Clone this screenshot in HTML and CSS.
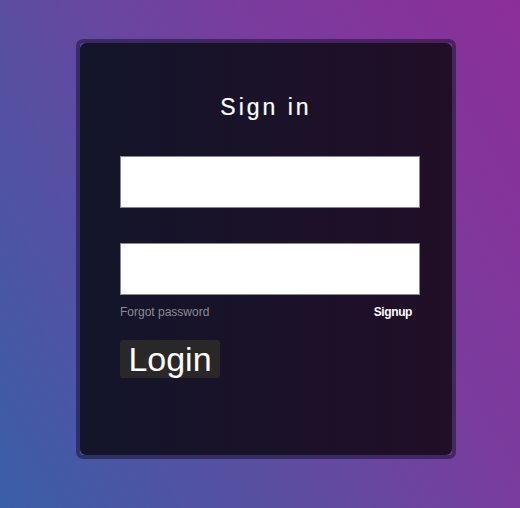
FILE: index.html
```html
<!DOCTYPE html>
<html>
<head>
<meta charset="utf-8">
<link rel="stylesheet" href="styles.css">
</head>
<body>
<div class="card">
  <div class="inner">
    <h1 class="title">Sign in</h1>
    <form class="form">
      <input class="field" type="text">
      <input class="field field-second" type="password">
      <div class="links">
        <a class="forgot">Forgot password</a>
        <a class="signup">Signup</a>
      </div>
      <button class="login" type="button">Login</button>
    </form>
  </div>
</div>
</body>
</html>
```
FILE: styles.css
```css
html, body {
  margin: 0;
  height: 100%;
}
body {
  background: linear-gradient(60deg, #3a5ea8 0%, #5a4ea0 35%, #7a3c9e 65%, #8c2e9a 100%);
  padding: 39px 0 0 76px;
  box-sizing: border-box;
  font-family: "Liberation Sans", Arial, sans-serif;
}
.card {
  width: 380px;
  height: 420px;
  box-sizing: border-box;
  border: 4px solid rgba(25, 18, 50, 0.55);
  border-radius: 7px;
  background-clip: padding-box;
}
.inner {
  height: 100%;
  border-radius: 6px;
  background: linear-gradient(90deg, #13152a 0%, #1a1229 50%, #210e27 100%);
  padding: 51px 0 0 40px;
  box-sizing: border-box;
}
.title {
  margin: 0 0 0 -40px;
  text-align: center;
  font-weight: normal;
  font-size: 23px;
  line-height: 26px;
  letter-spacing: 3px;
  color: #ffffff;
  -webkit-text-stroke: 0.2px #ffffff;
}
.form {
  display: flex;
  flex-direction: column;
  align-items: flex-start;
  width: 300px;
  margin-top: 36px;
}
.field {
  width: 300px;
  height: 52px;
  box-sizing: border-box;
  margin: 0;
  border: 1px solid #8a8a8a;
  background: #fff;
}
.field-second {
  margin-top: 35px;
}
.links {
  display: flex;
  justify-content: space-between;
  width: 292px;
  margin-top: 10px;
  font-size: 12px;
  line-height: 14px;
}
.forgot {
  color: #8e8b96;
}
.signup {
  color: #ffffff;
  font-weight: bold;
  letter-spacing: -0.4px;
}
.login {
  margin-top: 21px;
  width: 100px;
  height: 38px;
  padding: 0 0 1px;
  border: none;
  border-radius: 3px;
  background: #2a2729;
  color: #ffffff;
  font-family: "Liberation Sans", Arial, sans-serif;
  font-size: 34px;
  line-height: 36px;
  text-align: center;
}
```
